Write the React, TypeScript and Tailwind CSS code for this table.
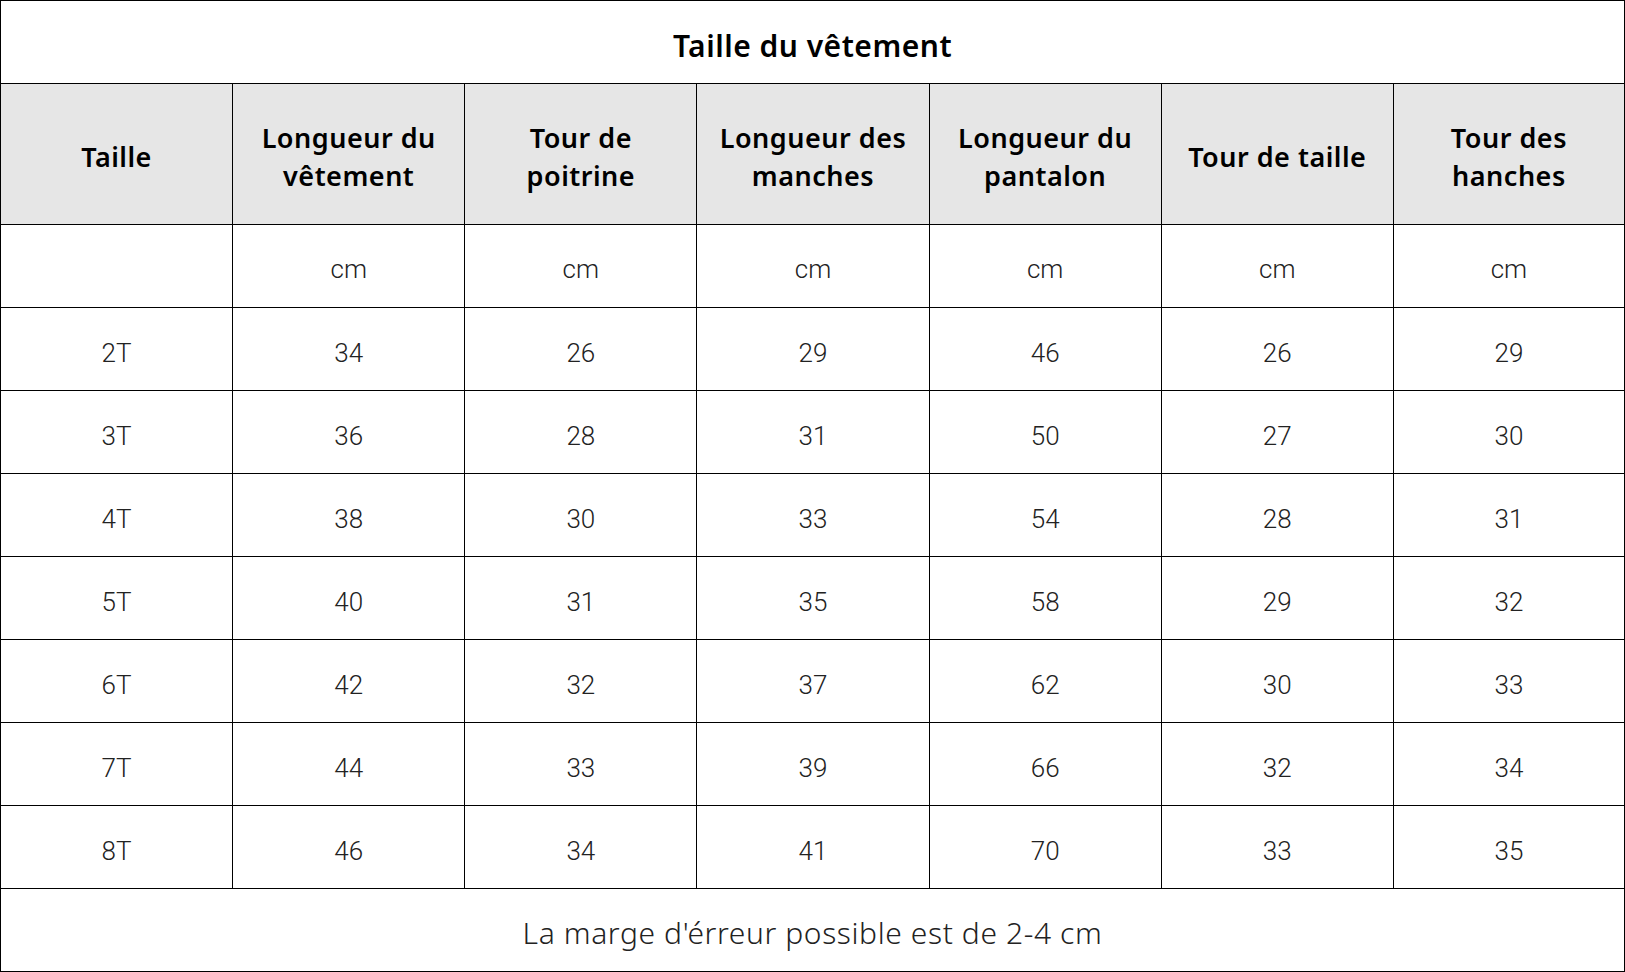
import React from "react";

const headers = [
  ["Taille"],
  ["Longueur du", "vêtement"],
  ["Tour de", "poitrine"],
  ["Longueur des", "manches"],
  ["Longueur du", "pantalon"],
  ["Tour de taille"],
  ["Tour des", "hanches"],
];

const rows = [
  ["2T", "34", "26", "29", "46", "26", "29"],
  ["3T", "36", "28", "31", "50", "27", "30"],
  ["4T", "38", "30", "33", "54", "28", "31"],
  ["5T", "40", "31", "35", "58", "29", "32"],
  ["6T", "42", "32", "37", "62", "30", "33"],
  ["7T", "44", "33", "39", "66", "32", "34"],
  ["8T", "46", "34", "41", "70", "33", "35"],
];

export default function App() {
  return (
    <div className="w-[1625px] h-[972px] bg-white text-black overflow-hidden">
      <div className="h-[83px] border-t border-l border-r border-black flex items-center justify-center pt-[6px] text-[30px] font-semibold font-['Noto_Sans','Open_Sans',sans-serif] tracking-[0.5px]">
        Taille du vêtement
      </div>
      <div className="grid grid-cols-7 h-[141px] border-t border-black bg-[#e6e6e6]">
        {headers.map((h, i) => (
          <div
            key={i}
            className={`flex flex-col items-center justify-center pt-[6px] border-l border-black text-[27px] font-semibold leading-[38px] tracking-[0.5px] font-['Noto_Sans','Open_Sans',sans-serif] ${i === 6 ? "border-r" : ""}`}
          >
            {h.map((line, j) => (
              <span key={j}>{line}</span>
            ))}
          </div>
        ))}
      </div>
      <div className="grid grid-cols-7 h-[83px] border-t border-black">
        {headers.map((_, i) => (
          <div
            key={i}
            className={`flex items-center justify-center border-l border-black text-[26px] font-light text-[#222] pt-[7px] font-['Roboto','Liberation_Sans',sans-serif] ${i === 6 ? "border-r" : ""}`}
          >
            {i === 0 ? "" : "cm"}
          </div>
        ))}
      </div>
      {rows.map((r, ri) => (
        <div key={ri} className="grid grid-cols-7 h-[83px] border-t border-black">
          {r.map((c, i) => (
            <div
              key={i}
              className={`flex items-center justify-center border-l border-black text-[26px] font-light text-[#222] pt-[8px] font-['Roboto','Liberation_Sans',sans-serif] ${i === 6 ? "border-r" : ""}`}
            >
              {c}
            </div>
          ))}
        </div>
      ))}
      <div className="h-[84px] border-t border-b border-l border-r border-black flex items-center justify-center text-[30px] font-light tracking-[0.6px] text-[#222] pt-[4px] font-['Noto_Sans','Open_Sans',sans-serif]">
        La marge d'érreur possible est de 2-4 cm
      </div>
    </div>
  );
}
